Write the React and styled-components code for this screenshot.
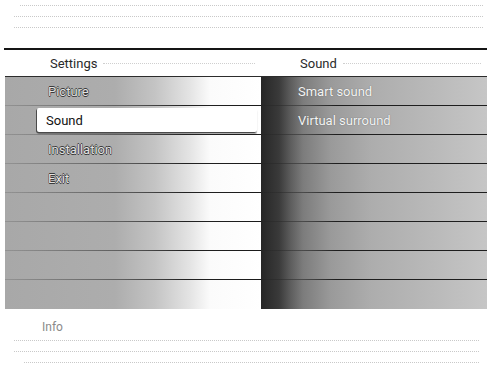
import React from "react";
import styled, { createGlobalStyle } from "styled-components";

const Global = createGlobalStyle`
  html, body { margin: 0; padding: 0; background: #fff; }
  body { font-family: Roboto, "Liberation Sans", Arial, sans-serif; }
`;

const Screen = styled.div`
  width: 487px;
  height: 369px;
  display: flex;
  flex-direction: column;
  background: #fff;
  overflow: hidden;
  & > * { flex-shrink: 0; }
`;

const Band = styled.div`
  height: ${(p) => p.$h}px;
  box-sizing: border-box;
  padding: ${(p) => p.$pad};
  display: flex;
  flex-direction: column;
  gap: ${(p) => p.$gap}px;
`;

const DotLine = styled.div`
  height: 0;
  border-top: 1px dotted #c9c9c9;
  margin-left: ${(p) => p.$indent || 0}px;
  margin-right: ${(p) => p.$right || 0}px;
`;

const Rule = styled.div`
  height: 2px;
  margin-left: 4px;
  background: #151515;
`;

const Header = styled.div`
  height: 26px;
  margin-left: 5px;
  display: grid;
  grid-template-columns: 256px 1fr;
  align-items: center;
`;

const HeaderCell = styled.div`
  display: flex;
  align-items: center;
  gap: 6px;
  padding-left: ${(p) => p.$pad}px;
  font-size: 13px;
  color: #2a2a2a;
  &::after {
    content: "";
    flex: 1;
    height: 0;
    margin-right: 6px;
    border-top: 1px dotted #cfcfcf;
  }
`;

const Panel = styled.div`
  height: 232px;
  margin-left: 5px;
  display: grid;
  grid-template-columns: 256px 1fr;
  border-top: 1px solid #2c2c2c;
  border-bottom: 2px solid #111;
  box-sizing: border-box;
`;

const Column = styled.div`
  display: flex;
  flex-direction: column;
  background: ${(p) =>
    p.$side === "left"
      ? "linear-gradient(to right, #a8a8a8 0px, #adadad 110px, #c4c4c4 150px, #e4e4e4 185px, #fbfbfb 205px, #ffffff 256px)"
      : "linear-gradient(to right, #262626 0px, #3a3a3a 18px, #5e5e5e 30px, #7c7c7c 42px, #9a9a9a 70px, #adadad 110px, #b9b9b9 170px, #c6c6c6 226px)"};
`;

const Row = styled.div`
  height: 29px;
  flex: 0 0 29px;
  box-sizing: border-box;
  display: flex;
  align-items: center;
  position: relative;
  &:not(:last-child)::after {
    content: "";
    position: absolute;
    left: 0;
    right: 0;
    bottom: 0;
    height: 1px;
    background: ${(p) =>
      p.$side === "left"
        ? "linear-gradient(to right, rgba(60,60,60,0.2) 0%, rgba(40,40,40,0.6) 45%, #222 70%, #1a1a1a 100%)"
        : "linear-gradient(to right, rgba(30,30,30,0.2) 0px, rgba(30,30,30,0.5) 40px, #1e1e1e 75px, #1e1e1e 100%)"};
  }
`;

const ItemText = styled.span`
  padding-left: ${(p) => p.$pad}px;
  font-size: 13px;
  color: ${(p) => p.$color};
  text-shadow: ${(p) => p.$shadow || "none"};
  white-space: nowrap;
`;

const Selected = styled.div`
  margin: 2px 4px 3px 32px;
  flex: 1;
  align-self: stretch;
  display: flex;
  align-items: center;
  background: #fff;
  border-radius: 2px;
  box-shadow: -1px 1px 0 #4a4a4a, 0 2px 1px rgba(0, 0, 0, 0.35);
  padding-left: 9px;
  font-size: 13px;
  color: #111;
`;

const Info = styled.div`
  height: 30px;
  box-sizing: border-box;
  padding: 12px 0 0 42px;
  font-size: 12px;
  line-height: 14px;
  color: #8a8a8a;
`;

const outline =
  "-0.6px 0 #3a3a3a, 0.6px 0 #3a3a3a, 0 0.6px #3a3a3a, 0 -0.6px #3a3a3a";

const leftItems = ["Picture", "Sound", "Installation", "Exit", "", "", "", ""];
const rightItems = ["Smart sound", "Virtual surround", "", "", "", "", "", ""];

export default function App() {
  return (
    <>
      <Global />
      <Screen>
        <Band $h={48} $pad="5px 4px 0 14px" $gap={10}>
          <DotLine $indent={6} />
          <DotLine />
          <DotLine />
        </Band>
        <Rule />
        <Header>
          <HeaderCell $pad={45}>Settings</HeaderCell>
          <HeaderCell $pad={39}>Sound</HeaderCell>
        </Header>
        <Panel>
          <Column $side="left">
            {leftItems.map((t, i) => (
              <Row key={i} $side="left">
                {t === "Sound" ? (
                  <Selected>{t}</Selected>
                ) : t ? (
                  <ItemText $pad={43} $color="#e2e2e2" $shadow={outline}>
                    {t}
                  </ItemText>
                ) : null}
              </Row>
            ))}
          </Column>
          <Column $side="right">
            {rightItems.map((t, i) => (
              <Row key={i} $side="right">
                {t ? (
                  <ItemText $pad={37} $color="#f6f6f6" $shadow="0 0 1px #555">
                    {t}
                  </ItemText>
                ) : null}
              </Row>
            ))}
          </Column>
        </Panel>
        <Info>Info</Info>
        <Band $h={31} $pad="2px 8px 0 14px" $gap={10}>
          <DotLine />
          <DotLine />
          <DotLine $indent={10} />
        </Band>
      </Screen>
    </>
  );
}
